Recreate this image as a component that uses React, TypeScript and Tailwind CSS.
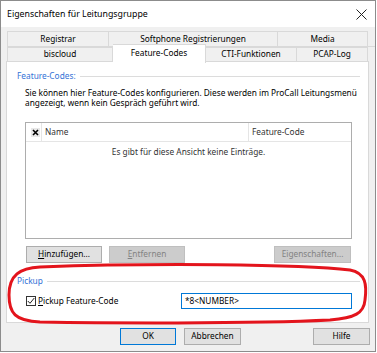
import React from "react";

function Tab({ label, w, first }: { label: string; w: number; first?: boolean }) {
  return (
    <div
      className={`h-full flex items-center justify-center border-t border-r border-[#d9d9d9] bg-[#f0f0f0] ${first ? "border-l" : ""}`}
      style={{ width: w }}
    >
      {label}
    </div>
  );
}

function Btn({
  children,
  w,
  disabled,
  primary,
}: {
  children: React.ReactNode;
  w: number;
  disabled?: boolean;
  primary?: boolean;
}) {
  return (
    <div
      className={`h-[17px] flex items-center justify-center border ${
        disabled
          ? "bg-[#cccccc] border-[#bfbfbf] text-[#838383]"
          : primary
          ? "bg-[#e1e1e1] border-[#0078d7] text-black"
          : "bg-[#e1e1e1] border-[#adadad] text-black"
      }`}
      style={{ width: w }}
    >
      {children}
    </div>
  );
}

export default function App() {
  return (
    <div className="w-[377px] h-[353px] bg-white relative font-['Noto_Sans',sans-serif] text-[8.3px] text-black leading-none whitespace-nowrap">
      <div className="w-[376px] h-[352px] border border-[#8c8c8c] bg-[#f0f0f0] flex flex-col">
        {/* title bar */}
        <div className="h-[26px] bg-white flex items-center pl-[6px] pr-[8px]">
          <span className="text-[8.8px] text-black">Eigenschaften für Leitungsgruppe</span>
          <div className="flex-1" />
          <svg width="11" height="11" viewBox="0 0 11 11">
            <path d="M0.5 0.5 L10.5 10.5 M10.5 0.5 L0.5 10.5" stroke="#222" strokeWidth="1" />
          </svg>
        </div>

        <div className="pl-[5px] pt-[4px] flex flex-col">
          {/* tabs */}
          <div className="ml-[1px] flex h-[15px]">
            <Tab label="Registrar" w={102} first />
            <Tab label="Softphone Registrierungen" w={169} />
            <Tab label="Media" w={90} />
          </div>
          <div className="ml-[1px] flex h-[15px] border-t border-[#d9d9d9]">
            <Tab label="biscloud" w={106} first />
            <div className="relative -top-[3px] h-[19px] w-[93px] flex items-center justify-center bg-white border-t border-r border-[#d9d9d9] z-10 pb-[2px]">
              Feature-Codes
            </div>
            <Tab label="CTI-Funktionen" w={91} />
            <Tab label="PCAP-Log" w={71} />
          </div>

          {/* panel */}
          <div className="w-[363px] h-[262px] bg-white border border-[#d9d9d9] flex flex-col pr-[8px]">
            <div className="mt-[8px] h-[12px] flex items-center pl-[10px]">
              <span className="text-[#3372d6]">Feature-Codes:</span>
              <div className="flex-1 h-px bg-[#dcdcdc] ml-[4px]" />
            </div>
            <div className="mt-[6px] pl-[18px] leading-[10px]">
              Sie können hier Feature-Codes konfigurieren. Diese werden im ProCall Leitungsmenü
              <br />
              angezeigt, wenn kein Gespräch geführt wird.
            </div>

            {/* list */}
            <div className="mt-[14px] ml-[18px] w-[327px] h-[117px] border border-[#adadad] flex flex-col">
              <div className="h-[19px] flex items-stretch border-b border-[#e5e5e5]">
                <div className="w-[15px] flex items-center justify-end pr-[1px]">
                  <div className="w-[9px] h-[9px] bg-[#e8e8e8] flex items-center justify-center">
                    <svg width="7" height="7" viewBox="0 0 7 7">
                      <path d="M1 1 L6 6 M6 1 L1 6" stroke="#000" strokeWidth="1.6" />
                    </svg>
                  </div>
                </div>
                <div className="w-px bg-[#e5e5e5]" />
                <div className="w-[206px] flex items-center pl-[3px] text-[#333]">Name</div>
                <div className="w-px bg-[#e5e5e5]" />
                <div className="flex-1 flex items-center pl-[3px] text-[#333]">Feature-Code</div>
              </div>
              <div className="h-[20px] flex items-center justify-center text-[#333]">
                Es gibt für diese Ansicht keine Einträge.
              </div>
            </div>

            {/* buttons */}
            <div className="mt-[7px] ml-[19px] flex">
              <Btn w={76}>
                <span>
                  <span className="underline">H</span>inzufügen...
                </span>
              </Btn>
              <div className="w-[7px]" />
              <Btn w={76} disabled>
                <span>
                  <span className="underline">E</span>ntfernen
                </span>
              </Btn>
              <div className="flex-1" />
              <div className="mr-[9px]">
                <Btn w={77} disabled>
                  Eigenschaften...
                </Btn>
              </div>
            </div>

            {/* pickup */}
            <div className="mt-[12px] h-[12px] flex items-center pl-[10px]">
              <span className="text-[#3372d6]">Pickup</span>
              <div className="flex-1 h-px bg-[#dcdcdc] ml-[4px]" />
            </div>
            <div className="mt-[6px] h-[16px] flex items-center pl-[19px]">
              <div className="w-[10px] h-[10px] border border-[#333] flex items-center justify-center">
                <svg width="8" height="8" viewBox="0 0 8 8">
                  <path d="M0.8 4 L3 6.3 L7.3 1" stroke="#222" strokeWidth="1" fill="none" />
                </svg>
              </div>
              <span className="ml-[2px]">
                <span className="underline">P</span>ickup Feature-Code
              </span>
              <div className="flex-1" />
              <div className="w-[171px] h-[16px] border border-[#0078d7] flex items-center pl-[3px] mr-[8px]">
                *8&lt;NUMBER&gt;
              </div>
            </div>
          </div>

          {/* bottom buttons */}
          <div className="mt-[5px] flex">
            <div className="w-[114px]" />
            <Btn w={56} primary>
              OK
            </Btn>
            <div className="w-[8px]" />
            <Btn w={57}>Abbrechen</Btn>
            <div className="w-[72px]" />
            <Btn w={57}>Hilfe</Btn>
          </div>
        </div>
      </div>

      {/* red annotation */}
      <svg className="absolute left-0 top-0 pointer-events-none" width="377" height="353" viewBox="0 0 377 353">
        <path
          d="M40 267 C150 263 300 264 350 270 C366 273 367 285 365 300 C364 313 355 318 330 320 C250 324 100 323 40 322 C15 321 9 313 9 295 C9 275 20 268 40 267 Z"
          fill="none"
          stroke="#e3141c"
          strokeWidth="3"
        />
      </svg>
    </div>
  );
}
